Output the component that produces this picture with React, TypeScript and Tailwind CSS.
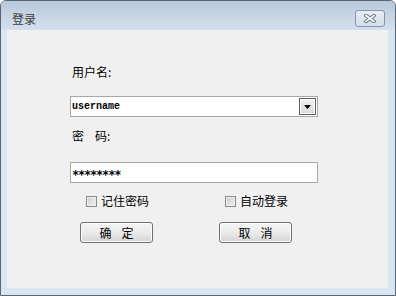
import React from "react";

const cjk = "font-['SimSun','Noto_Sans_CJK_SC',sans-serif]";

const CheckBox = ({ label }: { label: string }) => (
  <label className="flex items-center gap-[4px] h-[14px]">
    <span className="w-[11px] h-[11px] border border-[#8a8a8a] bg-gradient-to-br from-[#cbcbcb] to-[#f2f2f2] shadow-[inset_0_0_0_1px_#eeeeee]" />
    <span className={`${cjk} text-[12px] leading-[14px] text-black`}>{label}</span>
  </label>
);

const WinButton = ({ left, right }: { left: string; right: string }) => (
  <button
    type="button"
    className={`${cjk} w-[73px] h-[21px] rounded-[3px] border border-[#707070] bg-gradient-to-b from-[#f4f4f4] via-[#ebebeb] to-[#d4d4d4] shadow-[inset_0_0_0_1px_#fcfcfc] flex items-center justify-center gap-[10px] text-[12px] leading-[14px] text-black`}
  >
    <span>{left}</span>
    <span>{right}</span>
  </button>
);

export default function App() {
  return (
    <div className="w-[396px] h-[296px] flex flex-col rounded-t-[6px] border border-[#596675] bg-[#dae5f2] overflow-hidden">
      {/* 标题栏 */}
      <div className="h-[29px] pt-[6px] pl-[11px] pr-[10px] flex items-center justify-between bg-gradient-to-b from-[#b8c9dc] to-[#d4e0ee]">
        <span className={`${cjk} text-[12px] leading-[14px] text-[#3c3c3c]`}>登录</span>
        <div className="w-[30px] h-[17px] rounded-[3px] border border-[#8797a8] bg-gradient-to-b from-[#e6edf5] to-[#d3dfeb] flex items-center justify-center">
          <svg width="12" height="9" viewBox="0 0 12 9">
            <path d="M2 1.5 L10 7.5 M10 1.5 L2 7.5" stroke="#6b7a8a" strokeWidth="3.6" strokeLinecap="square" />
            <path d="M2 1.5 L10 7.5 M10 1.5 L2 7.5" stroke="#ffffff" strokeWidth="1.6" strokeLinecap="square" />
          </svg>
        </div>
      </div>

      {/* 内容区 */}
      <div className="flex-1 ml-[6px] mr-[7px] mb-[7px] bg-[#f0f0f0] flex flex-col pl-[63px]">
        <div className={`${cjk} mt-[35px] pl-[2px] text-[12px] leading-[14px] text-black`}>用户名:</div>

        <div className="mt-[17px] w-[248px] h-[21px] border border-[#a8a8a8] bg-white flex items-center justify-between pl-[1px] pr-[1px]">
          <span className="font-['Liberation_Mono',monospace] text-[10px] leading-[12px] text-black font-semibold">username</span>
          <span className="w-[17px] h-[17px] border border-[#5e5e5e] bg-gradient-to-b from-[#f2f2f2] to-[#d8d8d8] shadow-[inset_0_0_0_1px_#ffffff] flex items-center justify-center">
            <svg width="7" height="4" viewBox="0 0 7 4">
              <path d="M0 0 H7 L3.5 4 Z" fill="#000" />
            </svg>
          </span>
        </div>

        <div className={`${cjk} mt-[12px] pl-[2px] flex gap-[11px] text-[12px] leading-[14px] text-black`}>
          <span>密</span>
          <span>码:</span>
        </div>

        <div className="mt-[19px] w-[248px] h-[21px] border border-[#a8a8a8] bg-white flex items-center pl-[1px]">
          <span className="font-['DejaVu_Sans_Mono',monospace] text-[12px] leading-[12px] tracking-[-1.2px] text-black font-bold translate-y-[2px]">********</span>
        </div>

        <div className="mt-[11px] flex">
          <div className="ml-[16px] w-[139px]">
            <CheckBox label="记住密码" />
          </div>
          <CheckBox label="自动登录" />
        </div>

        <div className="mt-[14px] flex pl-[10px] gap-[66px]">
          <WinButton left="确" right="定" />
          <WinButton left="取" right="消" />
        </div>
      </div>
    </div>
  );
}
